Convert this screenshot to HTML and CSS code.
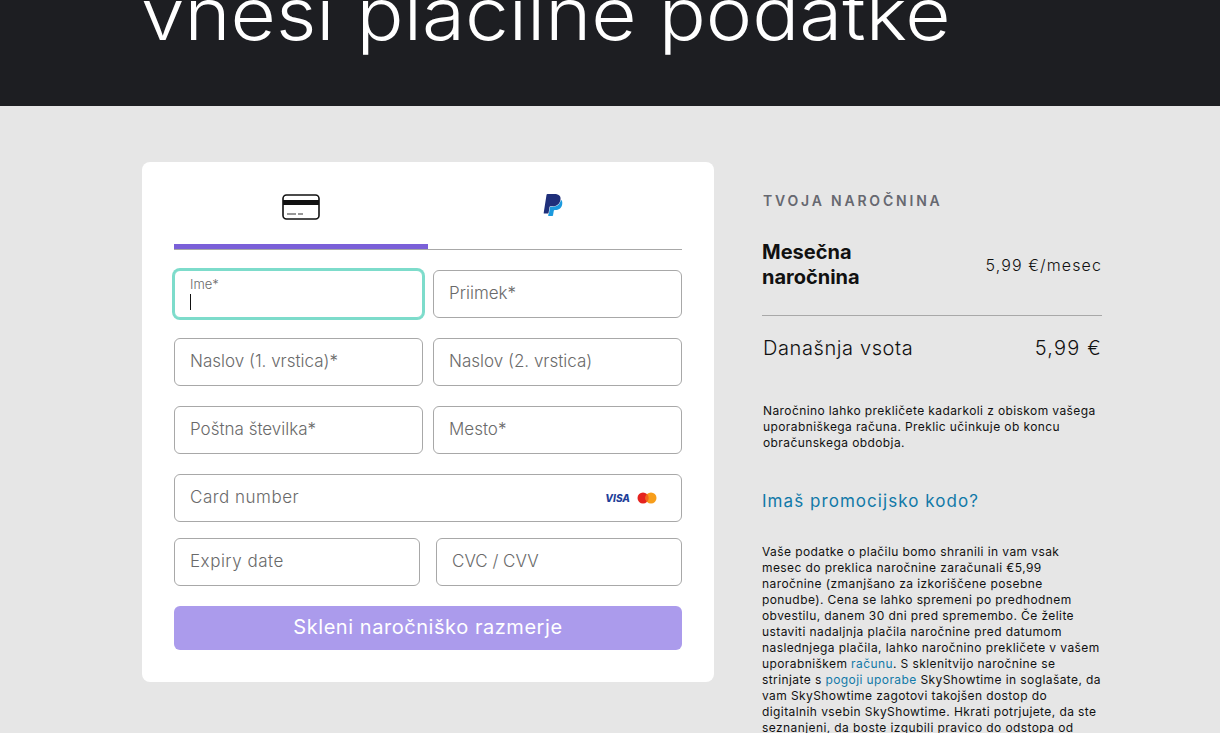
FILE: index.html
```html
<!DOCTYPE html>
<html>

<head>
    <title>SkyShowtime</title>
    <link rel="stylesheet" href="styles.css">
</head>

<body>
    <header class="hero">
        <h1>vnesi plačilne podatke</h1>
    </header>
    <main class="checkout">
        <section class="card">
            <div class="tabs">
                <div class="tab active">
                    <svg width="40" height="28" viewBox="0 0 40 28">
                        <rect x="2" y="2" width="36" height="24" rx="3.5" fill="#fff" stroke="#111" stroke-width="1.6" />
                        <rect x="2" y="7" width="36" height="5" fill="#111" />
                        <path d="M6 21h9M17 21h5" stroke="#333" stroke-width="1.2" />
                    </svg>
                </div>
                <div class="tab">
                    <svg class="paypal" width="22" height="24" viewBox="0 0 24 24">
                        <path fill="#1b9ade" d="M21.222 6.917a3.35 3.35 0 0 0-.607-.541c-.013.076-.026.175-.041.254-.93 4.778-4.005 7.201-9.138 7.201h-2.19a.563.563 0 0 0-.556.479l-1.187 7.527h-.506l-.24 1.516a.56.56 0 0 0 .554.647h3.882c.46 0 .85-.334.922-.788.06-.26.76-4.852.816-5.09a.932.932 0 0 1 .923-.788h.58c3.76 0 6.705-1.528 7.565-5.946.36-1.847.174-3.388-.777-4.471z" />
                        <path fill="#1f2f7a" d="M7.076 21.337H2.47a.641.641 0 0 1-.633-.74L4.944.901C5.026.382 5.474 0 5.998 0h7.46c2.57 0 4.578.543 5.69 1.81 1.01 1.15 1.304 2.42 1.012 4.287-.023.143-.047.288-.077.437-.983 5.05-4.349 6.797-8.647 6.797h-2.19c-.524 0-.968.382-1.05.9l-1.12 7.106z" />
                    </svg>
                </div>
            </div>
            <form class="form">
                <div class="row">
                    <div class="field focused">
                        <label class="small-label">Ime*</label>
                        <span class="caret"></span>
                    </div>
                    <div class="field"><span>Priimek*</span></div>
                </div>
                <div class="row">
                    <div class="field"><span>Naslov (1. vrstica)*</span></div>
                    <div class="field"><span>Naslov (2. vrstica)</span></div>
                </div>
                <div class="row">
                    <div class="field"><span>Poštna številka*</span></div>
                    <div class="field"><span>Mesto*</span></div>
                </div>
                <div class="field card-number">
                    <span class="spaced">Card number</span>
                    <div class="brands">
                        <span class="visa">VISA</span>
                        <svg width="20" height="12" viewBox="0 0 20 12">
                            <circle cx="6" cy="6" r="5.5" fill="#e5231f" />
                            <circle cx="14" cy="6" r="5.5" fill="#f79e1b" />
                            <path d="M10 2a5.5 5.5 0 0 1 0 8 5.5 5.5 0 0 1 0-8z" fill="#f2651c" />
                        </svg>
                    </div>
                </div>
                <div class="row row-wide">
                    <div class="field"><span class="spaced">Expiry date</span></div>
                    <div class="field"><span>CVC / CVV</span></div>
                </div>
                <button type="button" class="submit">Skleni naročniško razmerje</button>
            </form>
        </section>

        <aside class="summary">
            <h2>TVOJA NAROČNINA</h2>
            <div class="plan">
                <strong>Mesečna<br>naročnina</strong>
                <span>5,99 €/mesec</span>
            </div>
            <div class="total">
                <span>Današnja vsota</span>
                <span class="amount">5,99 €</span>
            </div>
            <p class="cancel">Naročnino lahko prekličete kadarkoli z obiskom vašega uporabniškega računa. Preklic učinkuje ob koncu obračunskega obdobja.</p>
            <a class="promo" href="#">Imaš promocijsko kodo?</a>
            <p class="legal">Vaše podatke o plačilu bomo shranili in vam vsak mesec do preklica naročnine zaračunali €5,99 naročnine (zmanjšano za izkoriščene posebne ponudbe). Cena se lahko spremeni po predhodnem obvestilu, danem 30 dni pred spremembo. Če želite ustaviti nadaljnja plačila naročnine pred datumom naslednjega plačila, lahko naročnino prekličete v vašem uporabniškem <a href="#">računu</a>. S sklenitvijo naročnine se strinjate s <a href="#">pogoji uporabe</a> SkyShowtime in soglašate, da vam SkyShowtime zagotovi takojšen dostop do digitalnih vsebin SkyShowtime. Hkrati potrjujete, da ste seznanjeni, da boste izgubili pravico do odstopa od</p>
        </aside>
    </main>
</body>

</html>
```

FILE: styles.css
```css
html, body {
    height: 733px;
    overflow: hidden;
}

body {
    font-family: 'Inter', 'Liberation Sans', sans-serif;
    margin: 0;
    padding: 0;
    background-color: #e6e6e6;
    color: #111;
}

.hero {
    height: 106px;
    background-color: #1d1e22;
    display: flex;
    align-items: flex-end;
    padding: 0 0 62px 141px;
    box-sizing: border-box;
    overflow: hidden;
}

.hero h1 {
    color: #fff;
    margin: 0;
    font-size: 72px;
    font-weight: 300;
    line-height: 60px;
    white-space: nowrap;
    transform: scaleX(1.087);
    transform-origin: left center;
}

.checkout {
    display: flex;
    align-items: flex-start;
    gap: 48px;
    padding: 56px 0 0 142px;
}

.card {
    width: 572px;
    box-sizing: border-box;
    height: 520px;
    background-color: #fff;
    border-radius: 8px;
    padding: 0 32px;
}

.tabs {
    display: flex;
    height: 87px;
    border-bottom: 1px solid #a8a8a8;
}

.tab {
    flex: 1;
    display: flex;
    justify-content: center;
    padding-top: 31px;
    box-sizing: border-box;
    height: 87px;
}

.tab.active {
    border-bottom: 5px solid #7a60d8;
}

.paypal {
    margin-right: 4px;
}

.form {
    display: flex;
    flex-direction: column;
    gap: 20px;
    padding-top: 20px;
}

.row {
    display: flex;
    gap: 10px;
}

.row-wide {
    gap: 16px;
    margin-top: -4px;
}

.field {
    flex: 1;
    height: 48px;
    box-sizing: border-box;
    border: 1px solid #a8a8a8;
    border-radius: 6px;
    background-color: #fff;
    display: flex;
    align-items: center;
    padding: 0 15px 2px;
    font-size: 17px;
    font-weight: 300;
    color: #6a6a6a;
}

.spaced {
    letter-spacing: 0.5px;
}

.field.focused {
    position: relative;
    border-color: #7ddccb;
    box-shadow: 0 0 0 2px #7ddccb;
}

.small-label {
    position: absolute;
    left: 15px;
    top: 5px;
    font-size: 13px;
}

.caret {
    position: absolute;
    left: 15px;
    top: 23px;
    width: 1px;
    height: 16px;
    background-color: #111;
}

.card-number {
    flex: none;
    justify-content: space-between;
    padding-right: 24px;
}

.brands {
    display: flex;
    align-items: center;
    gap: 7px;
    padding-top: 2px;
}

.visa {
    font-size: 10px;
    font-weight: 800;
    font-style: italic;
    color: #1f3f99;
}

.submit {
    height: 44px;
    border: none;
    border-radius: 6px;
    background-color: #ab9bec;
    color: #fff;
    font-family: inherit;
    font-size: 20px;
    font-weight: 400;
    letter-spacing: 0.55px;
    padding: 0 0 2px;
    cursor: pointer;
}

.summary {
    width: 340px;
}

.summary h2 {
    margin: 30px 0 0 1px;
    font-size: 14px;
    line-height: 17px;
    font-weight: 600;
    letter-spacing: 2.8px;
    color: #666870;
}

.plan {
    display: flex;
    justify-content: space-between;
    align-items: center;
    margin-top: 31px;
    padding-bottom: 25px;
    border-bottom: 1px solid #a8a8a8;
}

.plan strong {
    font-size: 20px;
    line-height: 25px;
    font-weight: 700;
}

.plan span {
    font-size: 16px;
    font-weight: 300;
    letter-spacing: 1.1px;
}

.total {
    display: flex;
    justify-content: space-between;
    align-items: center;
    margin: 19px 0 0 1px;
    font-size: 20px;
    font-weight: 300;
    line-height: 26px;
    letter-spacing: 0.6px;
}

.amount {
    letter-spacing: 1.2px;
}

.cancel {
    margin: 42px 0 0 1px;
    font-size: 12px;
    line-height: 16px;
    letter-spacing: 0.4px;
}

.promo {
    display: block;
    margin-top: 38px;
    font-size: 17px;
    line-height: 24px;
    color: #1179a8;
    text-decoration: none;
    letter-spacing: 1.05px;
}

.legal {
    margin: 31px 0 0;
    font-size: 12px;
    line-height: 16px;
    letter-spacing: 0.41px;
}

.legal a {
    color: #1179a8;
    text-decoration: none;
}
```
